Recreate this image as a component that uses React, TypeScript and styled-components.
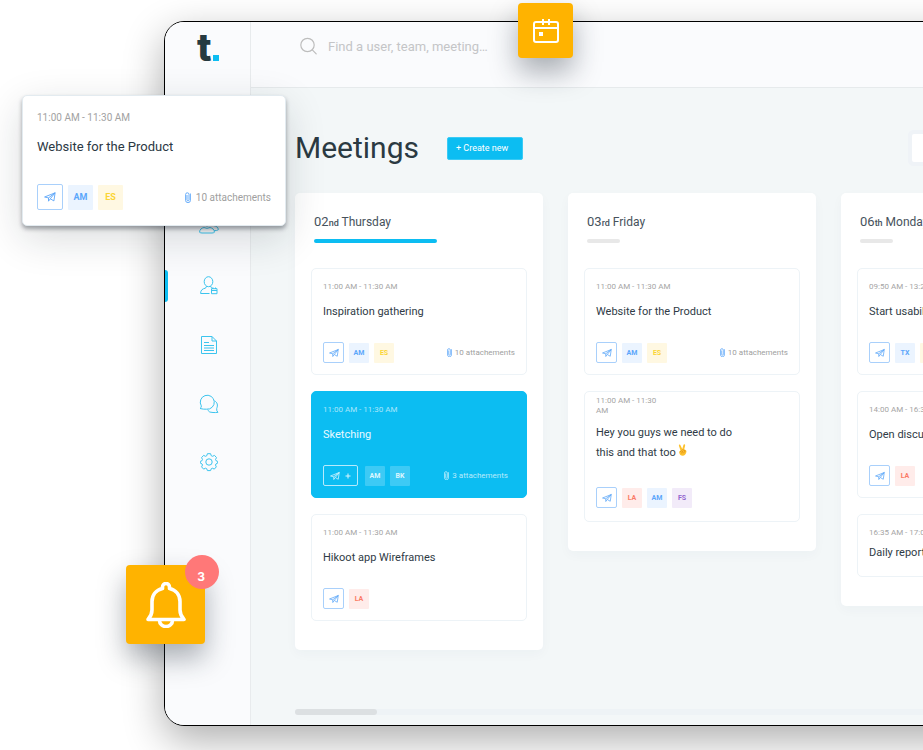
import React from "react";
import styled, { createGlobalStyle, css } from "styled-components";

const GlobalStyle = createGlobalStyle`
  *, *::before, *::after { box-sizing: border-box; }
  body { margin: 0; background: #fff; font-family: Roboto, sans-serif; color: #2b3a42; }
  h1, h2, h3, p { margin: 0; font-weight: 400; }
  button, input { font-family: inherit; }
  button { cursor: pointer; }
`;

const cyan = "#0cbdf2";

/* ---------- shell ---------- */

const Page = styled.div`
  position: relative;
  display: flex;
  min-height: 100vh;
  padding: 21px 0 24px 164px;
  overflow: hidden;
`;

const Device = styled.div`
  display: flex;
  flex: 1;
  min-width: 0;
  margin-right: -80px;
  background: #f3f7f8;
  border: 1px solid #000;
  border-radius: 20px;
  box-shadow: 0 14px 40px rgba(0, 0, 0, 0.32);
  overflow: hidden;
`;

const Sidebar = styled.aside`
  display: flex;
  flex-direction: column;
  flex: none;
  width: 86px;
  background: #fafbfd;
  border-right: 1px solid #e8ebed;
`;

const Logo = styled.div`
  display: flex;
  align-items: baseline;
  gap: 1px;
  height: 46px;
  padding-left: 32px;
  font: 800 38px/50px Inter, sans-serif;
  color: #263a40;
`;

const LogoDot = styled.span`
  width: 6px;
  height: 6px;
  background: ${cyan};
`;

const Nav = styled.nav`
  display: flex;
  flex-direction: column;
  margin-top: 129px;
`;

const NavLink = styled.a<{ $active?: boolean }>`
  display: flex;
  align-items: center;
  justify-content: center;
  height: 59px;
  padding-left: 3px;
  color: #3cc4ee;
  ${(p) =>
    p.$active &&
    css`
      &::before {
        content: "";
        width: 3px;
        height: 32px;
        margin-left: -3px;
        margin-right: auto;
        border-radius: 0 4px 4px 0;
        background: ${cyan};
      }
      svg { margin-right: auto; }
    `}
`;

const Body = styled.div`
  display: flex;
  flex: 1;
  flex-direction: column;
  min-width: 0;
`;

const TopBar = styled.header`
  display: flex;
  align-items: center;
  gap: 11px;
  height: 66px;
  padding: 0 49px 17px;
  background: #fafbfd;
  border-bottom: 1px solid #e6eaec;
  color: #bdbdbd;
`;

const SearchInput = styled.input`
  width: 180px;
  padding: 0;
  border: 0;
  outline: 0;
  background: transparent;
  font-size: 13px;
  color: #5b6770;
  &::placeholder { color: #c4c5c7; opacity: 1; }
`;

const Main = styled.main`
  display: flex;
  flex: 1;
  flex-direction: column;
  padding: 38px 0 10px 44px;
  overflow: hidden;
`;

const TitleRow = styled.div`
  display: flex;
  align-items: center;
  gap: 28px;
  height: 44px;
`;

const Title = styled.h1`
  font-size: 30px;
  line-height: 44px;
`;

const CreateButton = styled.button`
  height: 23px;
  padding: 0 14px 0 8px;
  border: 1px solid #3acbf5;
  border-radius: 2px;
  background: ${cyan};
  color: #fff;
  font-size: 9px;
  line-height: 20px;
`;

const FilterButton = styled.button`
  width: 90px;
  height: 28px;
  margin-left: auto;
  border: 0;
  border-radius: 2px;
  background: #fff;
  box-shadow: 0 0 0 4px #eff3f7;
`;

/* ---------- board ---------- */

const Board = styled.div`
  display: flex;
  align-items: flex-start;
  gap: 25px;
  margin-top: 23px;
`;

const ColumnBox = styled.section`
  flex: none;
  width: 248px;
  padding: 21px 16px 29px;
  border-radius: 5px;
  background: #fff;
  box-shadow: 0 4px 12px rgba(30, 60, 80, 0.03);
`;

const DayTitle = styled.h2`
  height: 16px;
  padding: 0 3px;
  font-size: 12px;
  line-height: 16px;
  white-space: nowrap;
  color: #47525c;
`;

const DayNumber = styled.span`
  font-size: 13px;
`;

const DaySuffix = styled.span`
  font-size: 9px;
  font-weight: 500;
`;

const DayBar = styled.div<{ $active?: boolean }>`
  width: ${(p) => (p.$active ? "123px" : "33px")};
  height: 4px;
  margin: 9px 3px 25px;
  border-radius: 2px;
  background: ${(p) => (p.$active ? cyan : "#e8e8e8")};
`;

const CardList = styled.div`
  display: flex;
  flex-direction: column;
  gap: 16px;
`;

type Variant = "plain" | "active" | "wrapped" | "short";

const CardBox = styled.article<{ $variant: Variant }>`
  padding: 12px 11px 11px;
  border: 1px solid #edf3f7;
  border-radius: 5px;
  background: #fff;
  ${(p) => p.$variant === "active" && css`background: ${cyan}; border-color: ${cyan};`}
  ${(p) => p.$variant === "wrapped" && css`padding: 4px 11px 13px;`}
  ${(p) => p.$variant === "short" && css`padding-bottom: 15px;`}
`;

const Time = styled.p<{ $variant: Variant }>`
  font-size: 8px;
  line-height: 12px;
  color: #a5a5a5;
  ${(p) => p.$variant === "active" && css`color: #a9e6fb;`}
  ${(p) => p.$variant === "wrapped" && css`width: 66px; line-height: 10px;`}
`;

const Meridiem = styled.span`
  font-size: 9px;
`;

const CardTitle = styled.h3<{ $variant: Variant }>`
  margin-top: 11px;
  font-size: 11px;
  line-height: 16px;
  color: #2f3b46;
  ${(p) => p.$variant === "active" && css`color: #e8f9ff;`}
  ${(p) => p.$variant === "wrapped" && css`width: 150px; margin-top: 7px; line-height: 20px;`}
  ${(p) => p.$variant === "short" && css`margin-top: 6px;`}
`;

const CardFooter = styled.div<{ $variant: Variant }>`
  display: flex;
  align-items: center;
  gap: 5px;
  margin-top: ${(p) => (p.$variant === "wrapped" ? "24px" : "22px")};
`;

const SendButton = styled.button<{ $active?: boolean; $large?: boolean }>`
  display: flex;
  align-items: center;
  justify-content: center;
  gap: 5px;
  width: ${(p) => (p.$large ? "26px" : p.$active ? "35px" : "21px")};
  height: ${(p) => (p.$large ? "26px" : "21px")};
  margin-right: ${(p) => (p.$active ? "2px" : "0")};
  padding: 0;
  border: 1px solid ${(p) => (p.$active ? "#b6eafc" : "#a9d0fb")};
  border-radius: 2px;
  background: transparent;
  color: ${(p) => (p.$active ? "#d9f5fe" : "#5aa5f8")};
`;

const tones = {
  blue: ["#ebf4ff", "#5aa6fb"],
  yellow: ["#fff8e2", "#fbd535"],
  red: ["#ffecea", "#fb7a65"],
  purple: ["#f2ebf9", "#9366cf"],
  glass: ["#3dcaf5", "#dff7ff"],
} as const;
type Tone = keyof typeof tones;

const Chip = styled.span<{ $tone: Tone; $large?: boolean }>`
  display: flex;
  align-items: center;
  justify-content: center;
  width: ${(p) => (p.$large ? "25px" : "20px")};
  height: ${(p) => (p.$large ? "25px" : "20px")};
  border-radius: 1px;
  background: ${(p) => tones[p.$tone][0]};
  color: ${(p) => tones[p.$tone][1]};
  font-size: ${(p) => (p.$large ? "9px" : "7px")};
  font-weight: 700;
`;

const Attachments = styled.span<{ $active?: boolean; $large?: boolean }>`
  display: flex;
  align-items: center;
  gap: ${(p) => (p.$large ? "5px" : "3px")};
  margin-left: auto;
  padding-right: ${(p) => (p.$active ? "7px" : "0")};
  font-size: ${(p) => (p.$large ? "10px" : "8px")};
  color: ${(p) => (p.$active ? "#b9ebfc" : "#a0a0a0")};
  svg { color: ${(p) => (p.$active ? "#c9f1fe" : "#5aa5f8")}; }
`;

const ScrollTrack = styled.div`
  flex: none;
  height: 6px;
  margin-top: auto;
  border-radius: 3px;
  background: #eef3f6;
`;

const ScrollThumb = styled.div`
  width: 82px;
  height: 6px;
  border-radius: 3px;
  background: #dce0e2;
`;

/* ---------- floating parts ---------- */

const FloatingCard = styled.article`
  position: absolute;
  top: 95px;
  left: 22px;
  width: 264px;
  padding: 15px 14px;
  border: 1px solid #e3ebf0;
  border-radius: 5px;
  background: #fff;
  box-shadow: 0 3px 4px rgba(20, 30, 40, 0.38), 0 12px 40px rgba(20, 30, 40, 0.16);
`;

const FloatingTime = styled.p`
  font-size: 10px;
  line-height: 14px;
  color: #a2a2a2;
`;

const FloatingTitle = styled.h3`
  margin-top: 12px;
  font-size: 13px;
  line-height: 20px;
  color: #2b3843;
`;

const FloatingFooter = styled.div`
  display: flex;
  align-items: center;
  gap: 5px;
  margin-top: 27px;
`;

const Tile = styled.button<{ $kind: "calendar" | "bell" }>`
  position: absolute;
  display: flex;
  align-items: center;
  justify-content: center;
  padding: 0;
  border: 0;
  border-radius: 4px;
  background: #ffb300;
  color: #fff;
  box-shadow: 0 14px 28px rgba(25, 35, 50, 0.36);
  ${(p) =>
    p.$kind === "calendar"
      ? css`top: 3px; left: 518px; width: 55px; height: 55px;`
      : css`top: 565px; left: 126px; width: 79px; height: 79px;`}
`;

const Badge = styled.span`
  position: absolute;
  top: -10px;
  right: -14px;
  width: 34px;
  height: 34px;
  padding-right: 2px;
  border-radius: 50%;
  background: #ff7878;
  font: 700 12px/44px Inter, sans-serif;
  text-align: center;
`;

/* ---------- drawings ---------- */

const PlaneIcon = ({ size = 10 }: { size?: number }) => (
  <svg width={size} height={size} viewBox="0 0 20 20" fill="none" stroke="currentColor" strokeWidth="1.5" strokeLinejoin="round" aria-hidden="true">
    <path d="M1 10 18.500 3 16.500 16.500 10.500 13 7.500 17V11.500Z" />
    <path d="M7.500 11.500 18.500 3 10.500 13" />
  </svg>
);

const ClipIcon = ({ large }: { large?: boolean }) => (
  <svg width={large ? 6 : 5} height={large ? 11 : 9} viewBox="0 0 6 11" fill="none" stroke="currentColor" strokeWidth="0.9" aria-hidden="true">
    <path d="M2 3v4.800a1 1 0 0 0 2 0V2.500A1.500 1.500 0 0 0 .6 2.500V8.500a2.300 2 0 0 0 4.800 0V1.500" />
  </svg>
);

const PlusIcon = () => (
  <svg width="6" height="6" viewBox="0 0 6 6" fill="none" stroke="currentColor" strokeWidth="1" aria-hidden="true">
    <path d="M3 0.500v5M0.500 3h5" />
  </svg>
);

const VictoryHand = () => (
  <svg width="9" height="12" viewBox="0 0 18 24" role="img" aria-label="victory hand">
    <path d="M5 13 1.800 3.500Q1.500 1.500 3 1.200 4.500 1 5.200 2.800L8.500 10 11 1.500Q11.600 0 13.200.4 14.700 1 14.300 2.800L12.500 10.500 16 12.500Q17.500 14 16.500 17 15 23 9.500 23.500 3.500 23.500 2.500 17.500 2 14 5 13Z" fill="#fdc12e" />
    <path d="M4 15.500Q7 12 9 14.500 10.500 16.500 7 18M9.500 11.500 14 13.500M11 18 14 14.500" fill="none" stroke="#dd8a12" strokeWidth="1.400" strokeLinecap="round" />
  </svg>
);

const SearchIcon = () => (
  <svg width="17" height="18" viewBox="0 0 17 18" fill="none" stroke="currentColor" strokeWidth="1.200" strokeLinecap="round" aria-hidden="true">
    <circle cx="7.500" cy="8" r="6.700" />
    <path d="m12.300 12.800 3.900 4" />
  </svg>
);

const iconProps = {
  width: 18,
  height: 20,
  viewBox: "0 0 18 20",
  fill: "none",
  stroke: "currentColor",
  strokeWidth: 1,
  strokeLinejoin: "round" as const,
  "aria-hidden": true,
};

const TeamIcon = () => (
  <svg {...iconProps} width={20} viewBox="0 2 20 20">
    <circle cx="8" cy="7" r="4" />
    <path d="M.6 17.300c0-3 2-4.200 4.400-4.800q3 1.800 6 0c2.400.6 4.400 1.800 4.400 4.800q-1 .7-2.400.7H3q-1.400 0-2.400-.7ZM12 3.600a3.800 3.800 0 1 1 2.200 6.900M14.500 10.500c2.500.5 4.700 1.600 4.900 4.200q-1.400 1.100-4.300 1" />
  </svg>
);

const UserIcon = () => (
  <svg {...iconProps}>
    <ellipse cx="8.500" cy="5.700" rx="4.300" ry="5" />
    <path d="M9.500 17.500H.6c0-3.700 2-4.700 5-5.400l1-2M10.500 10q.4 2 2.500 2.500M11.500 12.700h5.500v5h-5.500ZM11.500 14.500H17M13 11.500v1.500M15.500 11.500v1.500" />
  </svg>
);

const DocumentIcon = () => (
  <svg {...iconProps}>
    <path d="M1.500 1.500h10.500l4.500 4.500v12.500H1.500ZM12 1.500v4.500h4.500" />
    <path d="M4 7.500h5M4 10.500h10M4 13h10M4 15.500h10" strokeWidth="1.200" />
  </svg>
);

const ChatIcon = () => (
  <svg {...iconProps} width={20} viewBox="0 0 20 20">
    <path d="M1 14.500q1.700-1 1.300-2.600A7 7 0 1 1 7.500 15.200q-3 .2-6.500-.7Z" />
    <path d="M15.500 6.800c2.900 1.600 3.600 4.300 2.200 7.700q-.4 2.500 1.300 3.800-2.500.4-5 .2-3.700.4-5.500-2.600" />
  </svg>
);

const GearIcon = () => (
  <svg {...iconProps} viewBox="0 1 18 20">
    <circle cx="9" cy="10" r="3.200" />
    <path d="M7.400 1.700h3.200l.6 2 1.300.6 2-.9 2 2.200-1 2 .5 1.100 1.700.7v1.700l-1.700.8-.5 1.100.8 1.900-2 2.200-2-.9-1.100.6-.6 1.800H7.400l-.6-1.800-1.200-.6-2 .9-2-2.200.9-1.900-.5-1.100-1.700-.8V9.400L2 8.700l.5-1.100-.9-2 2-2.200 2 .9 1.200-.6Z" />
  </svg>
);

const CalendarIcon = () => (
  <svg width="26" height="26" viewBox="0 0 26 26" fill="none" stroke="currentColor" strokeWidth="2" aria-hidden="true">
    <rect x="1" y="4" width="24" height="20" rx="2" />
    <path d="M1 10h24M10 1v6M16 1v6" />
    <rect x="6" y="14" width="4" height="4" fill="currentColor" stroke="none" />
  </svg>
);

const BellIcon = () => (
  <svg width="40" height="46" viewBox="0 0 40 46" fill="none" stroke="currentColor" strokeWidth="3.600" strokeLinecap="round" strokeLinejoin="round" aria-hidden="true">
    <path d="M16.500 6.500V5a3.500 3.500 0 0 1 7 0v1.500C30 8 34 13 34 19.500V28q0 5 4 9.500H2q4-4.500 4-9.500V19.500C6 13 10 8 16.500 6.500" />
    <path d="M13.500 38.500a6.500 6 0 0 0 13 0" />
  </svg>
);

/* ---------- data ---------- */

interface Meeting {
  time: string;
  title: React.ReactNode;
  variant?: Variant;
  chips?: [string, Tone][];
  attachments?: number;
}

interface Day {
  number: string;
  suffix: string;
  name: string;
  active?: boolean;
  meetings: Meeting[];
}

const slot = "11:00 AM - 11:30 AM";

const days: Day[] = [
  {
    number: "02", suffix: "nd", name: "Thursday", active: true,
    meetings: [
      { time: slot, title: "Inspiration gathering", chips: [["AM", "blue"], ["ES", "yellow"]], attachments: 10 },
      { time: slot, title: "Sketching", variant: "active", chips: [["AM", "glass"], ["BK", "glass"]], attachments: 3 },
      { time: slot, title: "Hikoot app Wireframes", chips: [["LA", "red"]] },
    ],
  },
  {
    number: "03", suffix: "rd", name: "Friday",
    meetings: [
      { time: slot, title: "Website for the Product", chips: [["AM", "blue"], ["ES", "yellow"]], attachments: 10 },
      {
        time: slot, variant: "wrapped", title: <>Hey you guys we need to do this and that too <VictoryHand /></>,
        chips: [["LA", "red"], ["AM", "blue"], ["FS", "purple"]],
      },
    ],
  },
  {
    number: "06", suffix: "th", name: "Monday",
    meetings: [
      { time: "09:50 AM - 13:20 PM", title: "Start usability testing", chips: [["TX", "blue"], ["ES", "yellow"]] },
      { time: "14:00 AM - 16:30 PM", title: "Open discussion", chips: [["LA", "red"]] },
      { time: "16:35 AM - 17:00 PM", title: "Daily reports", variant: "short" },
    ],
  },
];

const MeetingCard = ({ time, title, variant = "plain", chips, attachments }: Meeting) => {
  const active = variant === "active";
  return (
    <CardBox $variant={variant}>
      <Time $variant={variant}>{time}</Time>
      <CardTitle $variant={variant}>{title}</CardTitle>
      {chips && (
        <CardFooter $variant={variant}>
          <SendButton $active={active} aria-label="Send invite">
            <PlaneIcon />
            {active && <PlusIcon />}
          </SendButton>
          {chips.map(([label, tone]) => <Chip key={label} $tone={tone}>{label}</Chip>)}
          {attachments && (
            <Attachments $active={active}><ClipIcon />{attachments} attachements</Attachments>
          )}
        </CardFooter>
      )}
    </CardBox>
  );
};

export default function App() {
  return (
    <Page>
      <GlobalStyle />
      <Device>
        <Sidebar>
          <Logo>t<LogoDot /></Logo>
          <Nav aria-label="Main">
            <NavLink href="#team" aria-label="Team"><TeamIcon /></NavLink>
            <NavLink href="#meetings" aria-label="Meetings" $active><UserIcon /></NavLink>
            <NavLink href="#documents" aria-label="Documents"><DocumentIcon /></NavLink>
            <NavLink href="#chat" aria-label="Chat"><ChatIcon /></NavLink>
            <NavLink href="#settings" aria-label="Settings"><GearIcon /></NavLink>
          </Nav>
        </Sidebar>
        <Body>
          <TopBar>
            <SearchIcon />
            <SearchInput type="search" aria-label="Search" placeholder="Find a user, team, meeting…" />
          </TopBar>
          <Main>
            <TitleRow>
              <Title>Meetings</Title>
              <CreateButton>+ Create new</CreateButton>
              <FilterButton aria-label="Filter" />
            </TitleRow>
            <Board>
              {days.map((day) => (
                <ColumnBox key={day.number}>
                  <DayTitle>
                    <DayNumber>{day.number}</DayNumber>
                    <DaySuffix>{day.suffix}</DaySuffix> {day.name}
                  </DayTitle>
                  <DayBar $active={day.active} />
                  <CardList>
                    {day.meetings.map((m, i) => <MeetingCard key={i} {...m} />)}
                  </CardList>
                </ColumnBox>
              ))}
            </Board>
            <ScrollTrack><ScrollThumb /></ScrollTrack>
          </Main>
        </Body>
      </Device>

      <FloatingCard>
        <FloatingTime>{slot}</FloatingTime>
        <FloatingTitle>Website for the Product</FloatingTitle>
        <FloatingFooter>
          <SendButton $large aria-label="Send invite"><PlaneIcon size={12} /></SendButton>
          <Chip $tone="blue" $large>AM</Chip>
          <Chip $tone="yellow" $large>ES</Chip>
          <Attachments $large><ClipIcon large />10 attachements</Attachments>
        </FloatingFooter>
      </FloatingCard>
      <Tile $kind="calendar" aria-label="Calendar"><CalendarIcon /></Tile>
      <Tile $kind="bell" aria-label="Notifications"><BellIcon /><Badge>3</Badge></Tile>
    </Page>
  );
}
